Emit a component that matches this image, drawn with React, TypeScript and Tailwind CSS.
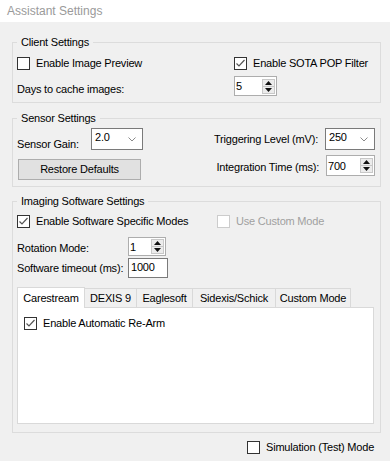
import type { ReactNode } from 'react';

function Check({ checked = false, disabled = false }: { checked?: boolean; disabled?: boolean }) {
  return (
    <span
      className={`w-[13px] h-[13px] shrink-0 bg-white border flex items-center justify-center ${
        disabled ? 'border-[#cccccc]' : 'border-[#333333]'
      }`}
    >
      {checked && (
        <svg width="11" height="11" viewBox="0 0 11 11">
          <polyline points="1.5,5.5 4,8 9.5,2" fill="none" stroke="#555555" strokeWidth="1.2" />
        </svg>
      )}
    </span>
  );
}

function CheckRow({ label, checked, disabled }: { label: string; checked?: boolean; disabled?: boolean }) {
  return (
    <div className="flex items-center h-[13px] gap-[6px] whitespace-nowrap">
      <Check checked={checked} disabled={disabled} />
      <span className={`leading-[13px] ${disabled ? 'text-[#a0a0a0]' : ''}`}>{label}</span>
    </div>
  );
}

function Spinner({ value, w, h = 20 }: { value: string; w: string; h?: number }) {
  return (
    <div className={`${w} flex bg-white border border-[#adadad] pl-[1px] pr-[1px] items-center`} style={{ height: h }}>
      <span className="flex-1 leading-[13px] pt-[1px]">{value}</span>
      <div className="w-[13px] h-[15px] flex flex-col border border-[#c8c8c8] bg-[#ececec]">
        <div className="flex-1 flex items-center justify-center border-b border-[#c8c8c8]">
          <svg width="7" height="4" viewBox="0 0 7 4"><polygon points="3.5,0 7,4 0,4" fill="#111" /></svg>
        </div>
        <div className="flex-1 flex items-center justify-center">
          <svg width="7" height="4" viewBox="0 0 7 4"><polygon points="0,0 7,0 3.5,4" fill="#111" /></svg>
        </div>
      </div>
    </div>
  );
}

function Combo({ value, w }: { value: string; w: string }) {
  return (
    <div className={`${w} h-[22px] flex items-center bg-white border border-[#7a7a7a] pl-[3px] pr-[6px]`}>
      <span className="flex-1 leading-[13px] -mt-[3px]">{value}</span>
      <svg width="8" height="5" viewBox="0 0 8 5">
        <polyline points="0.5,0.5 4,4 7.5,0.5" fill="none" stroke="#8a8a8a" strokeWidth="1" />
      </svg>
    </div>
  );
}

function Group({ title, className, children }: { title: string; className: string; children: ReactNode }) {
  return (
    <div className={`relative border border-[#dcdcdc] ${className}`}>
      <span className="absolute -top-[7px] left-[4px] px-[4px] bg-[#f0f0f0] leading-[13px] whitespace-nowrap">{title}</span>
      {children}
    </div>
  );
}

const tabs = [
  { label: 'Carestream', w: 'w-[68px]' },
  { label: 'DEXIS 9', w: 'w-[52px]' },
  { label: 'Eaglesoft', w: 'w-[56px]' },
  { label: 'Sidexis/Schick', w: 'w-[83px]' },
  { label: 'Custom Mode', w: 'w-[75px]' },
];

export default function App() {
  return (
    <div className="w-[390px] h-[461px] bg-[#f0f0f0] text-[11px] tracking-[-0.2px] text-black font-['Liberation_Sans',Arial,sans-serif] overflow-hidden">
      {/* title bar */}
      <div className="h-[22px] bg-white pl-[7px] flex items-center text-[12px] tracking-normal text-[#9a9a9a]">Assistant Settings</div>

      <div className="pl-[12px] pr-[9px]">
        {/* Client Settings */}
        <Group title="Client Settings" className="mt-[20px] h-[61px]">
          <div className="pl-[4px] pt-[14px] flex">
            <div className="w-[217px] flex flex-col">
              <CheckRow label="Enable Image Preview" />
              <div className="h-[20px] mt-[6px] flex items-center leading-[13px] pt-[6px] whitespace-nowrap">Days to cache images:</div>
            </div>
            <div className="flex flex-col">
              <CheckRow label="Enable SOTA POP Filter" checked />
              <div className="mt-[6px]">
                <Spinner value="5" w="w-[43px]" />
              </div>
            </div>
          </div>
        </Group>

        {/* Sensor Settings */}
        <Group title="Sensor Settings" className="mt-[15px] h-[69px]">
          <div className="pl-[4px] pt-[9px] flex whitespace-nowrap">
            <div className="w-[190px] flex flex-col">
              <div className="flex items-center h-[22px]">
                <span className="w-[74px] leading-[13px] pt-[11px]">Sensor Gain:</span>
                <Combo value="2.0" w="w-[52px]" />
              </div>
              <button className="mt-[9px] ml-[1px] w-[123px] h-[21px] bg-[#e1e1e1] border border-[#adadad] leading-[13px]">
                Restore Defaults
              </button>
            </div>
            <div className="flex-1 flex flex-col items-end pr-[5px]">
              <div className="flex items-center h-[22px] gap-[7px]">
                <span className="leading-[13px] pt-[1px]">Triggering Level (mV):</span>
                <Combo value="250" w="w-[50px]" />
              </div>
              <div className="flex items-center h-[21px] mt-[5px] gap-[7px]">
                <span className="leading-[13px] pt-[4px]">Integration Time (ms):</span>
                <Spinner value="700" w="w-[49px]" h={21} />
              </div>
            </div>
          </div>
        </Group>

        {/* Imaging Software Settings */}
        <Group title="Imaging Software Settings" className="mt-[14px] h-[232px]">
          <div className="pl-[4px] pt-[13px] flex flex-col whitespace-nowrap">
            <div className="flex">
              <div className="w-[200px]">
                <CheckRow label="Enable Software Specific Modes" checked />
              </div>
              <CheckRow label="Use Custom Mode" disabled />
            </div>
            <div className="flex items-center mt-[9px] h-[19px]">
              <span className="w-[111px] leading-[13px] pt-[3px]">Rotation Mode:</span>
              <Spinner value="1" w="w-[38px]" h={19} />
            </div>
            <div className="flex items-center mt-[2px] h-[20px]">
              <span className="w-[111px] leading-[13px] pt-[1px]">Software timeout (ms):</span>
              <div className="w-[40px] h-[20px] bg-white border border-[#7a7a7a] pl-[2px] leading-[13px] pt-[2px]">1000</div>
            </div>

            {/* tabs */}
            <div className="mt-[9px] flex items-end h-[20px]">
              {tabs.map((t, i) => (
                <div
                  key={t.label}
                  className={`${t.w} flex items-center justify-center border border-[#d9d9d9] leading-[13px] ${
                    i === 0 ? 'h-[21px] bg-white border-b-0 relative z-10 -mb-[1px]' : 'h-[19px] bg-[#f0f0f0] border-l-0 border-b-0'
                  }`}
                >
                  {t.label}
                </div>
              ))}
            </div>
            <div className="w-[357px] h-[117px] bg-white border border-[#d9d9d9] pl-[6px] pt-[9px]">
              <CheckRow label="Enable Automatic Re-Arm" checked />
            </div>
          </div>
        </Group>

        <div className="mt-[8px] flex justify-start pl-[235px]">
          <CheckRow label="Simulation (Test) Mode" />
        </div>
      </div>
    </div>
  );
}
